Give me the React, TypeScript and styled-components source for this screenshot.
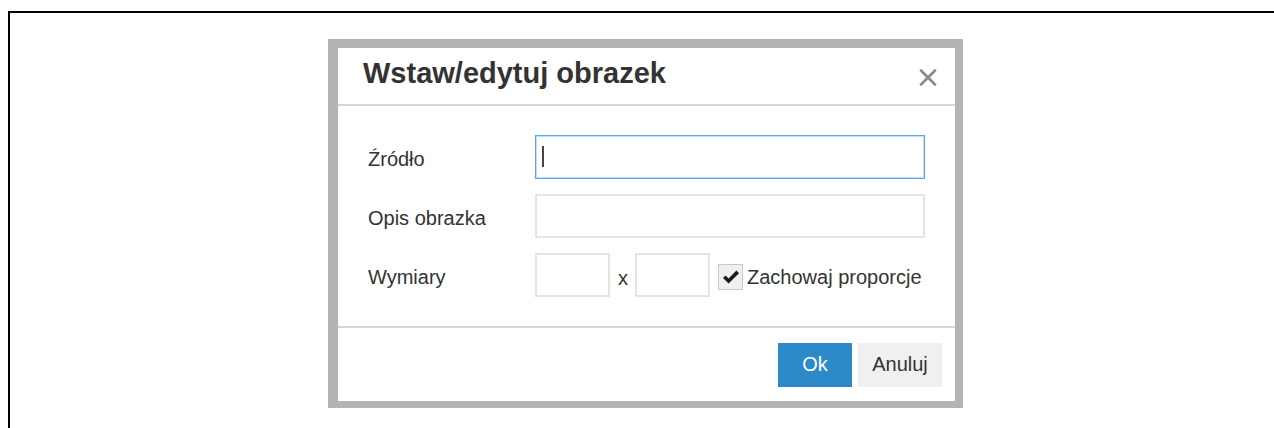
import React from "react";
import styled, { createGlobalStyle } from "styled-components";

const GlobalStyle = createGlobalStyle`
  html, body {
    margin: 0;
    padding: 0;
    background: #ffffff;
    overflow: hidden;
  }
  body {
    font-family: "Liberation Sans", Arial, sans-serif;
    color: #333333;
  }
  * { box-sizing: border-box; }
`;

const Frame = styled.div`
  margin: 11px 0 0 8px;
  height: calc(100vh - 11px);
  border-top: 2px solid #000000;
  border-left: 2px solid #000000;
  padding: 26px 0 0 318px;
`;

const Dialog = styled.div`
  width: 635px;
  height: 369px;
  background: #ffffff;
  border-style: solid;
  border-color: #b4b4b4;
  border-width: 9px 8px 7px 10px;
  display: flex;
  flex-direction: column;
`;

const Header = styled.div`
  height: 58px;
  flex: none;
  display: flex;
  align-items: flex-start;
  justify-content: space-between;
  padding: 8px 18px 0 25px;
  border-bottom: 2px solid #d6d6d6;
`;

const Title = styled.h1`
  margin: 0;
  font-size: 29px;
  line-height: 34px;
  font-weight: bold;
  color: #333333;
`;

const CloseButton = styled.button`
  margin-top: 13px;
  width: 18px;
  height: 17px;
  padding: 0;
  border: 0;
  background: transparent;
  display: flex;
  cursor: pointer;
`;

const Body = styled.div`
  flex: none;
  height: 222px;
  padding: 29px 30px 0 30px;
  display: flex;
  flex-direction: column;
  gap: 15px;
  border-bottom: 2px solid #d6d6d6;
`;

const Row = styled.div`
  display: grid;
  grid-template-columns: 167px 1fr;
  align-items: center;
  height: 44px;
`;

const Label = styled.label`
  font-size: 20px;
  color: #333333;
  padding-top: 4px;
`;

const FieldWrap = styled.div`
  position: relative;
  height: 44px;
`;

const TextField = styled.input<{ $focused?: boolean }>`
  width: 100%;
  height: 100%;
  margin: 0;
  padding: 0 8px;
  font: inherit;
  font-size: 20px;
  color: #333333;
  background: #ffffff;
  outline: none;
  border: ${(p) => (p.$focused ? "1px solid #5aa6e6" : "2px solid #e4e4e4")};
  box-shadow: ${(p) =>
    p.$focused ? "inset 0 0 0 1px rgba(120, 182, 235, 0.45)" : "none"};
`;

const Caret = styled.span`
  position: absolute;
  left: 7px;
  top: 11px;
  width: 2px;
  height: 21px;
  background: #444444;
`;

const SizeRow = styled.div`
  display: flex;
  align-items: center;
  height: 44px;
`;

const SizeField = styled.input`
  width: 75px;
  height: 44px;
  margin: 0;
  padding: 0 6px;
  font: inherit;
  font-size: 20px;
  background: #ffffff;
  outline: none;
  border: 2px solid #e4e4e4;
`;

const Times = styled.span`
  font-size: 20px;
  color: #333333;
  margin: 6px 7px 0 8px;
`;

const CheckLabel = styled.label`
  display: flex;
  align-items: center;
  margin-left: 8px;
  font-size: 20px;
  color: #333333;
  gap: 4px;
  padding-top: 4px;
  cursor: pointer;
`;

const CheckBox = styled.span`
  width: 25px;
  height: 26px;
  background: #f0f0f0;
  border: 1px solid #c8c8c8;
  display: flex;
  align-items: center;
  justify-content: center;
`;

const Footer = styled.div`
  flex: 1;
  display: flex;
  align-items: center;
  justify-content: flex-end;
  gap: 6px;
  padding: 0 13px 0 0;
`;

const Button = styled.button<{ $primary?: boolean }>`
  height: 44px;
  min-width: ${(p) => (p.$primary ? "74px" : "84px")};
  padding: 0 12px;
  border: 0;
  font-family: inherit;
  font-size: 20px;
  cursor: pointer;
  background: ${(p) => (p.$primary ? "#2d8ac9" : "#f0f0f0")};
  color: ${(p) => (p.$primary ? "#ffffff" : "#333333")};
`;

export default function App() {
  return (
    <>
      <GlobalStyle />
      <Frame>
        <Dialog role="dialog">
          <Header>
            <Title>Wstaw/edytuj obrazek</Title>
            <CloseButton aria-label="Zamknij">
              <svg width="18" height="17" viewBox="0 0 18 17">
                <path
                  d="M2 1.5 L16 15.5 M16 1.5 L2 15.5"
                  stroke="#8a8a8a"
                  strokeWidth="2.6"
                  strokeLinecap="round"
                />
              </svg>
            </CloseButton>
          </Header>
          <Body>
            <Row>
              <Label>Źródło</Label>
              <FieldWrap>
                <TextField $focused />
                <Caret />
              </FieldWrap>
            </Row>
            <Row>
              <Label>Opis obrazka</Label>
              <FieldWrap>
                <TextField />
              </FieldWrap>
            </Row>
            <Row>
              <Label>Wymiary</Label>
              <SizeRow>
                <SizeField />
                <Times>x</Times>
                <SizeField />
                <CheckLabel>
                  <CheckBox>
                    <svg width="18" height="15" viewBox="0 0 18 15">
                      <path
                        d="M1 8 L3.6 5.4 L6.6 8.4 L14.4 0.6 L17 3.2 L6.6 13.6 Z"
                        fill="#1a1a1a"
                      />
                    </svg>
                  </CheckBox>
                  Zachowaj proporcje
                </CheckLabel>
              </SizeRow>
            </Row>
          </Body>
          <Footer>
            <Button $primary>Ok</Button>
            <Button>Anuluj</Button>
          </Footer>
        </Dialog>
      </Frame>
    </>
  );
}
